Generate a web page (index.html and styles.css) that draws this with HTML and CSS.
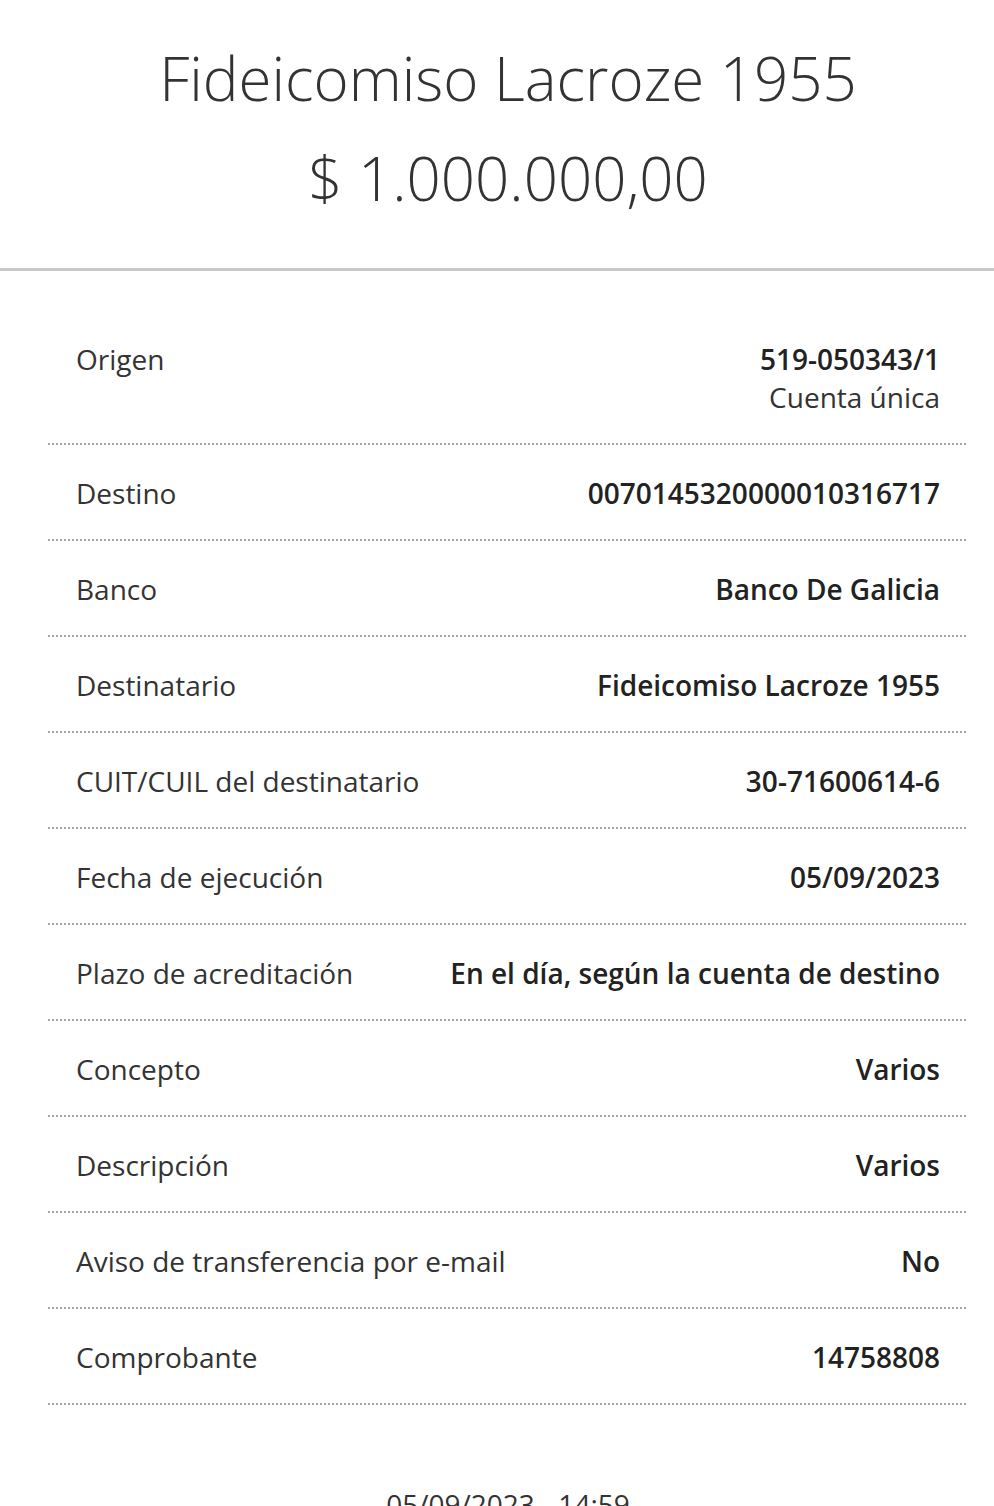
FILE: index.html
```html
<!DOCTYPE html>
<html lang="es">
<head>
<meta charset="utf-8">
<title>Comprobante</title>
<link rel="stylesheet" href="styles.css">
</head>
<body>
<header class="header">
  <h1 class="title">Fideicomiso Lacroze 1955</h1>
  <div class="amount">$ 1.000.000,00</div>
</header>
<div class="divider"></div>
<main class="details">
  <div class="row">
    <div class="label">Origen</div>
    <div class="value"><strong>519-050343/1</strong><span class="sub">Cuenta única</span></div>
  </div>
  <div class="row">
    <div class="label">Destino</div>
    <div class="value"><strong>0070145320000010316717</strong></div>
  </div>
  <div class="row">
    <div class="label">Banco</div>
    <div class="value"><strong>Banco De Galicia</strong></div>
  </div>
  <div class="row">
    <div class="label">Destinatario</div>
    <div class="value"><strong>Fideicomiso Lacroze 1955</strong></div>
  </div>
  <div class="row">
    <div class="label">CUIT/CUIL del destinatario</div>
    <div class="value"><strong>30-71600614-6</strong></div>
  </div>
  <div class="row">
    <div class="label">Fecha de ejecución</div>
    <div class="value"><strong>05/09/2023</strong></div>
  </div>
  <div class="row">
    <div class="label">Plazo de acreditación</div>
    <div class="value"><strong>En el día, según la cuenta de destino</strong></div>
  </div>
  <div class="row">
    <div class="label">Concepto</div>
    <div class="value"><strong>Varios</strong></div>
  </div>
  <div class="row">
    <div class="label">Descripción</div>
    <div class="value"><strong>Varios</strong></div>
  </div>
  <div class="row">
    <div class="label">Aviso de transferencia por e-mail</div>
    <div class="value"><strong>No</strong></div>
  </div>
  <div class="row">
    <div class="label">Comprobante</div>
    <div class="value"><strong>14758808</strong></div>
  </div>
</main>
<footer class="footer">05/09/2023 - 14:59</footer>
</body>
</html>
```
FILE: styles.css
```css
html, body {
  margin: 0;
  padding: 0;
  background: #fff;
}
body {
  font-family: "Open Sans", "Noto Sans", sans-serif;
  color: #333;
  overflow: hidden;
}
.header {
  padding: 28px 0 40px 22px;
  text-align: center;
}
.title,
.amount {
  margin: 0;
  font-size: 60px;
  font-weight: 300;
  line-height: 100px;
  color: #333;
}
.divider {
  height: 3px;
  background: #c8c8c8;
}
.details {
  padding: 40px 26px 0 48px;
}
.row {
  display: flex;
  justify-content: space-between;
  align-items: flex-start;
  gap: 24px;
  padding: 29px 28px 29px;
  font-size: 28px;
  line-height: 38px;
  background-image: linear-gradient(to right, #a6a6a6 50%, transparent 50%);
  background-size: 4px 2px;
  background-repeat: repeat-x;
  background-position: left bottom;
}
.label {
  color: #333;
  white-space: nowrap;
}
.value {
  text-align: right;
  display: flex;
  flex-direction: column;
  color: #222;
}
.value strong {
  font-weight: 600;
}
.sub {
  font-weight: 400;
  color: #333;
}
.footer {
  text-align: center;
  font-size: 28px;
  line-height: 38px;
  margin-top: 80px;
  padding-left: 22px;
  color: #333;
}
```
